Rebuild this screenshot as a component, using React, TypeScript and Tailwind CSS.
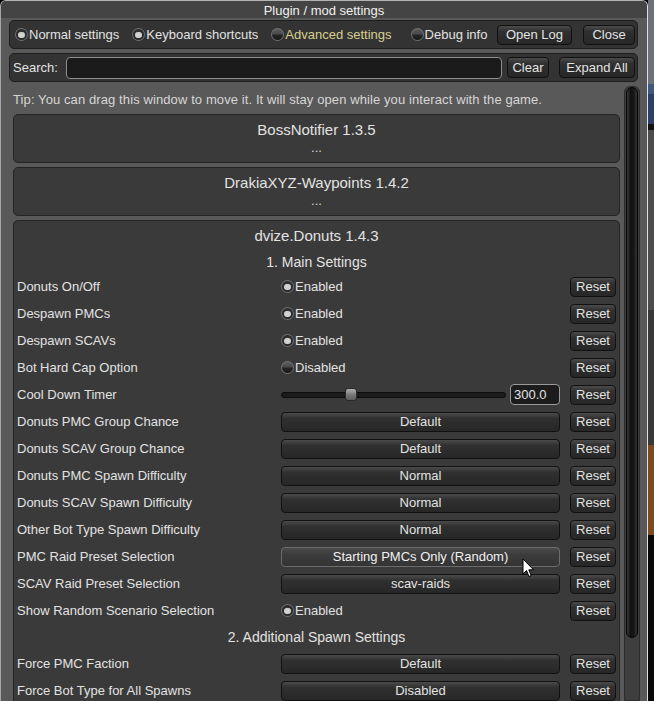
import React from "react";

type Row = {
  label: string;
  kind: "radio" | "drop" | "slider";
  value: string;
  on?: boolean;
  hover?: boolean;
};

const mainRows: Row[] = [
  { label: "Donuts On/Off", kind: "radio", value: "Enabled", on: true },
  { label: "Despawn PMCs", kind: "radio", value: "Enabled", on: true },
  { label: "Despawn SCAVs", kind: "radio", value: "Enabled", on: true },
  { label: "Bot Hard Cap Option", kind: "radio", value: "Disabled", on: false },
  { label: "Cool Down Timer", kind: "slider", value: "300.0" },
  { label: "Donuts PMC Group Chance", kind: "drop", value: "Default" },
  { label: "Donuts SCAV Group Chance", kind: "drop", value: "Default" },
  { label: "Donuts PMC Spawn Difficulty", kind: "drop", value: "Normal" },
  { label: "Donuts SCAV Spawn Difficulty", kind: "drop", value: "Normal" },
  { label: "Other Bot Type Spawn Difficulty", kind: "drop", value: "Normal" },
  { label: "PMC Raid Preset Selection", kind: "drop", value: "Starting PMCs Only (Random)", hover: true },
  { label: "SCAV Raid Preset Selection", kind: "drop", value: "scav-raids" },
  { label: "Show Random Scenario Selection", kind: "radio", value: "Enabled", on: true },
];

const extraRows: Row[] = [
  { label: "Force PMC Faction", kind: "drop", value: "Default" },
  { label: "Force Bot Type for All Spawns", kind: "drop", value: "Disabled" },
];

const btnCls =
  "flex items-center justify-center shrink-0 rounded-[4px] border border-[#111111] bg-[linear-gradient(#4b4b4b,#303030_30%,#272727)] text-[#e3e3e3] leading-none";

function Radio({ on }: { on: boolean }) {
  return (
    <span className="flex items-center justify-center shrink-0 w-[13px] h-[13px] rounded-full bg-[#707070] p-[1px]">
      <span
        className={
          "flex items-center justify-center w-[11px] h-[11px] rounded-full " +
          (on
            ? "bg-[radial-gradient(circle,#444444,#1a1a1a)]"
            : "bg-[linear-gradient(#5a5a5a,#4a4a4a_45%,#242424_55%,#1a1a1a)]")
        }
      >
        {on && <span className="w-[7px] h-[6px] rounded-full bg-[#d2d2d2]" />}
      </span>
    </span>
  );
}

function RadioItem({ on, text, className }: { on: boolean; text: string; className?: string }) {
  return (
    <div className={"flex items-center " + (className ?? "")}>
      <Radio on={on} />
      <span className="ml-[1px]">{text}</span>
    </div>
  );
}

function Reset() {
  return <div className={btnCls + " w-[46px] h-[20px] ml-[10px]"}>Reset</div>;
}

function SettingRow({ row }: { row: Row }) {
  return (
    <div className="h-[27px] flex items-center">
      <div className="w-[264px] shrink-0 whitespace-nowrap">{row.label}</div>
      <div className="w-[279px] shrink-0 flex items-center">
        {row.kind === "radio" && <RadioItem on={!!row.on} text={row.value} />}
        {row.kind === "drop" && (
          <div
            className={
              "w-[279px] h-[20px] flex items-center justify-center rounded-[4px] border leading-none " +
              (row.hover
                ? "border-[#6c6c6c] bg-[linear-gradient(#4c4c4c,#3c3c3c_35%,#343434)] text-[#f0f0f0]"
                : "border-[#111111] bg-[linear-gradient(#4b4b4b,#303030_30%,#272727)] text-[#e3e3e3]")
            }
          >
            {row.value}
          </div>
        )}
        {row.kind === "slider" && (
          <>
            <div className="relative w-[225px] h-[13px] flex items-center">
              <div className="w-full h-[6px] rounded-full border border-[#0d0d0d] bg-[#1c1c1c]" />
              <div className="absolute left-[64px] top-0 w-[12px] h-[13px] rounded-[3px] border border-[#2a2a2a] bg-[linear-gradient(#b0b0b0,#7a7a7a_50%,#5c5c5c)]" />
            </div>
            <div className="ml-[4px] w-[50px] h-[21px] flex items-center pl-[3px] rounded-[4px] border border-[#9a9a9a] bg-[#1c1c1c] text-[#e3e3e3] leading-none">
              {row.value}
            </div>
          </>
        )}
      </div>
      <Reset />
    </div>
  );
}

function CollapsedMod({ title }: { title: string }) {
  return (
    <div className="h-[49px] rounded-[5px] border border-[#242424] bg-[#3a3a3a] flex flex-col items-center pt-[5px]">
      <div className="h-[18px] flex items-center text-[15px] leading-none">{title}</div>
      <div className="h-[18px] flex items-center leading-none text-[#d8d8d8]">...</div>
    </div>
  );
}

export default function App() {
  return (
    <div className="relative w-[654px] h-[701px] overflow-hidden flex bg-black font-['Liberation_Sans',Arial,sans-serif] text-[13px] text-[#e2e2e2]">
      {/* window */}
      <div className="w-[648px] h-[701px] shrink-0 flex flex-col rounded-t-[6px] border-t border-l border-r border-t-[#b4b4b4] border-l-[#a6a6a6] border-r-[#dedede] bg-[#595959] overflow-hidden">
        <div className="h-[17px] shrink-0 flex items-center justify-center bg-[#444444] text-[#f0f0f0] leading-none pt-[1px]">
          Plugin / mod settings
        </div>

        {/* toolbar */}
        <div className="mt-[2px] ml-[8px] mr-[9px] h-[29px] shrink-0 flex items-center pl-[5px] pr-[2px] rounded-[5px] border border-[#1e1e1e] bg-[#333333]">
          <RadioItem on={true} text="Normal settings" />
          <RadioItem on={true} text="Keyboard shortcuts" className="ml-[13px]" />
          <RadioItem on={false} text="Advanced settings" className="ml-[13px] text-[#d8cf8f]" />
          <RadioItem on={false} text="Debug info" className="ml-[19px]" />
          <div className={btnCls + " ml-auto w-[75px] h-[20px]"}>Open Log</div>
          <div className={btnCls + " ml-[11px] w-[52px] h-[20px]"}>Close</div>
        </div>

        {/* search */}
        <div className="mt-[4px] ml-[8px] mr-[9px] h-[29px] shrink-0 flex items-center pl-[3px] pr-[2px] rounded-[5px] border border-[#1e1e1e] bg-[#333333]">
          <div className="w-[53px] shrink-0">Search:</div>
          <div className="w-[436px] h-[22px] shrink-0 rounded-[4px] border border-[#8e8e8e] bg-[#1b1b1b]" />
          <div className={btnCls + " ml-[5px] w-[42px] h-[21px]"}>Clear</div>
          <div className={btnCls + " ml-[10px] w-[76px] h-[21px]"}>Expand All</div>
        </div>

        {/* scroll area */}
        <div className="mt-[4px] flex-1 min-h-0 flex overflow-hidden">
          <div className="w-[622px] shrink-0 pl-[12px] pr-[3px] pt-[7px] flex flex-col">
            <div className="h-[16px] flex items-center leading-none whitespace-nowrap tracking-[0.1px] text-[#d6d6d6]">
              Tip: You can drag this window to move it. It will stay open while you interact with the game.
            </div>
            <div className="mt-[8px] flex flex-col gap-[4px]">
              <CollapsedMod title="BossNotifier 1.3.5" />
              <CollapsedMod title="DrakiaXYZ-Waypoints 1.4.2" />
              <div className="rounded-[5px] border border-[#242424] bg-[#3a3a3a] pl-[3px] pr-[3px] pb-[10px]">
                <div className="h-[29px] flex items-center justify-center text-[15px] leading-none">
                  dvize.Donuts 1.4.3
                </div>
                <div className="h-[23px] flex items-center justify-center text-[14px] leading-none">
                  1. Main Settings
                </div>
                {mainRows.map((r) => (
                  <SettingRow key={r.label} row={r} />
                ))}
                <div className="h-[26px] flex items-center justify-center text-[14px] leading-none">
                  2. Additional Spawn Settings
                </div>
                {extraRows.map((r) => (
                  <SettingRow key={r.label} row={r} />
                ))}
              </div>
            </div>
          </div>
          {/* scrollbar */}
          <div className="ml-[1px] w-[16px] shrink-0 rounded-t-[6px] border border-[#2c2c2c] bg-[#3e3e3e] flex justify-center">
            <div className="w-[12px] h-[551px] rounded-full border border-[#050505] bg-[linear-gradient(90deg,#3a3a3a,#121212_35%,#161616_65%,#333333)]" />
          </div>
        </div>
      </div>

      {/* background strip beyond the window */}
      <div className="w-[6px] h-[701px] flex flex-col">
        <div className="h-[84px] bg-[#6c7078]" />
        <div className="h-[10px] bg-[#40587e]" />
        <div className="h-[30px] bg-[#2c3f66]" />
        <div className="h-[6px] bg-[#121212]" />
        <div className="h-[180px] bg-[#4c4c4c]" />
        <div className="h-[135px] bg-[#383838]" />
        <div className="h-[90px] bg-[#7a4a22]" />
        <div className="flex-1 bg-[#080808]" />
      </div>

      {/* mouse cursor */}
      <svg className="absolute left-[522px] top-[558px]" width="13" height="20" viewBox="0 0 13 20">
        <path d="M1 1 L1 16 L4.5 12.5 L7 18.5 L9.2 17.6 L6.8 11.8 L11.5 11.8 Z" fill="#ffffff" stroke="#000000" strokeWidth="1" strokeLinejoin="round" />
      </svg>
    </div>
  );
}
